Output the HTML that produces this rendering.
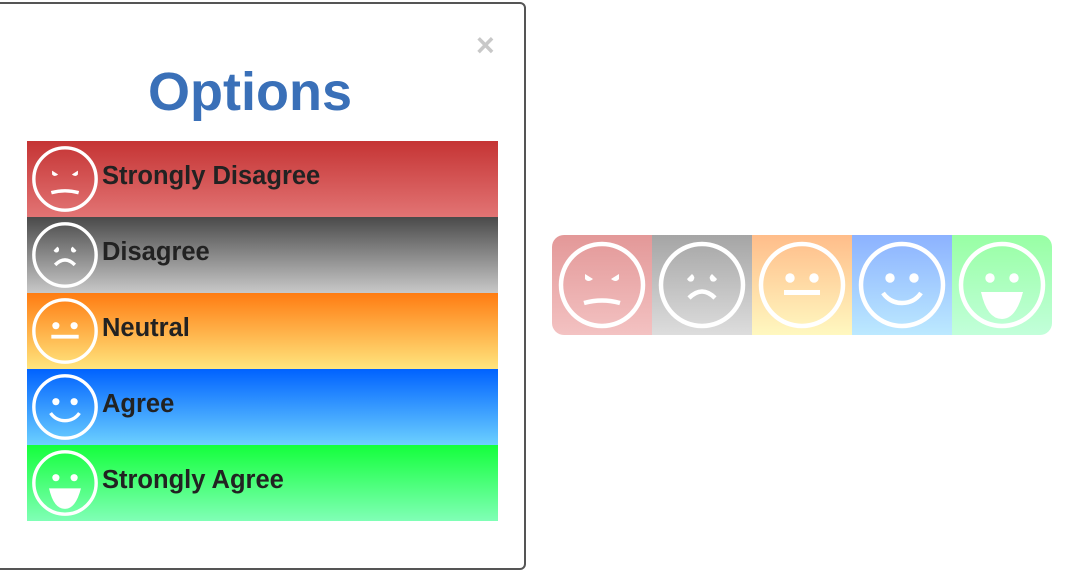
<!DOCTYPE html>
<html><head><meta charset="utf-8"><style>
html,body{margin:0;padding:0;background:#fff;width:1068px;height:570px;overflow:hidden;font-family:"Liberation Sans",Arial,sans-serif;}
.modal{position:absolute;left:-3px;top:2px;width:525px;height:564px;background:#fff;border:2px solid #555;border-radius:0 6px 6px 0;box-sizing:content-box;}
.close{position:absolute;left:477px;top:25px;font-size:32px;font-weight:bold;color:#c8c8c8;line-height:32px;}
.title{position:absolute;left:1px;width:500px;text-align:center;top:56px;font-size:54px;font-weight:bold;color:#3a70b8;line-height:64px;}
.row{position:absolute;left:28px;width:471px;height:76px;}
.row svg{position:absolute;left:0px;top:0px;width:76px;height:76px;}
.row span{position:absolute;left:75px;top:20px;font-size:25.5px;font-weight:bold;color:#222;line-height:30px;}
.strip{position:absolute;left:552px;top:235px;width:500px;height:100px;border-radius:12px;overflow:hidden;display:flex;}
.strip div{width:100px;height:100px;}
.strip svg{width:100px;height:100px;display:block;}
</style></head><body>
<svg width="0" height="0" style="position:absolute">
<defs>
<g id="f1"><circle cx="50" cy="50" r="41" fill="none" stroke="#fff" stroke-width="4.5"/>
<path d="M33 39 L41 44 Q36 48 33 44 Z M67 39 L59 44 Q64 48 67 44 Z" fill="#fff"/>
<path d="M32 68 Q50 63 68 68" fill="none" stroke="#fff" stroke-width="4.5"/></g>
<g id="f2"><circle cx="50" cy="50" r="41" fill="none" stroke="#fff" stroke-width="4.5"/>
<path d="M35 44 L40 39 Q44 42 41 46 Q37 48 35 44 Z M65 44 L60 39 Q56 42 59 46 Q63 48 65 44 Z" fill="#fff"/>
<path d="M37 63 Q50 50 63 63" fill="none" stroke="#fff" stroke-width="4.5"/></g>
<g id="f3"><circle cx="50" cy="50" r="41" fill="none" stroke="#fff" stroke-width="4.5"/>
<circle cx="38" cy="43" r="4.7" fill="#fff"/><circle cx="62" cy="43" r="4.7" fill="#fff"/>
<rect x="32" y="55" width="36" height="5" fill="#fff"/></g>
<g id="f4"><circle cx="50" cy="50" r="41" fill="none" stroke="#fff" stroke-width="4.5"/>
<circle cx="38" cy="43" r="4.7" fill="#fff"/><circle cx="62" cy="43" r="4.7" fill="#fff"/>
<path d="M31 58 Q38 68 50 68 Q62 68 69 58" fill="none" stroke="#fff" stroke-width="4.5"/></g>
<g id="f5"><circle cx="50" cy="50" r="41" fill="none" stroke="#fff" stroke-width="4.5"/>
<circle cx="38" cy="43" r="4.7" fill="#fff"/><circle cx="62" cy="43" r="4.7" fill="#fff"/>
<path d="M29 57 H71 Q64 84 50 84 Q35 84 29 57 Z" fill="#fff"/></g>
</defs></svg>

<div class="modal">
<div class="close">×</div>
<div class="title">Options</div>
<div class="row" style="top:137px;background:linear-gradient(#c53434,#e27474)"><svg viewBox="0 0 100 100"><use href="#f1"/></svg><span>Strongly Disagree</span></div>
<div class="row" style="top:213px;background:linear-gradient(#4a4a4a,#c8c8c8)"><svg viewBox="0 0 100 100"><use href="#f2"/></svg><span>Disagree</span></div>
<div class="row" style="top:289px;background:linear-gradient(#ff7c12,#ffe57e)"><svg viewBox="0 0 100 100"><use href="#f3"/></svg><span>Neutral</span></div>
<div class="row" style="top:365px;background:linear-gradient(#0062ff,#6cd0ff)"><svg viewBox="0 0 100 100"><use href="#f4"/></svg><span>Agree</span></div>
<div class="row" style="top:441px;background:linear-gradient(#14ff3c,#80ffb6)"><svg viewBox="0 0 100 100"><use href="#f5"/></svg><span>Strongly Agree</span></div>
</div>

<div class="strip">
<div style="background:linear-gradient(#e39898,#f3c2c2)"><svg viewBox="0 0 100 100"><use href="#f1"/></svg></div>
<div style="background:linear-gradient(#a5a5a5,#dddddd)"><svg viewBox="0 0 100 100"><use href="#f2"/></svg></div>
<div style="background:linear-gradient(#ffbd8a,#fff8c0)"><svg viewBox="0 0 100 100"><use href="#f3"/></svg></div>
<div style="background:linear-gradient(#8cb2ff,#bce9ff)"><svg viewBox="0 0 100 100"><use href="#f4"/></svg></div>
<div style="background:linear-gradient(#98ffa4,#c2ffda)"><svg viewBox="0 0 100 100"><use href="#f5"/></svg></div>
</div>
</body></html>
